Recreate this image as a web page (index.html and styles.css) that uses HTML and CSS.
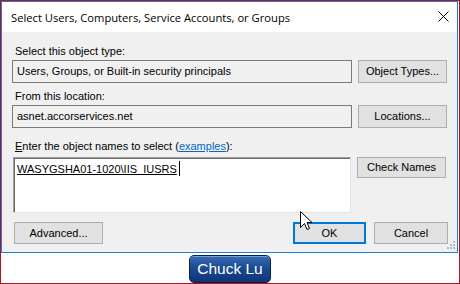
FILE: index.html
```html
<!DOCTYPE html>
<html lang="en">
<head>
  <meta charset="UTF-8">
  <title>Select Users, Computers, Service Accounts, or Groups</title>
  <link rel="stylesheet" href="styles.css">
</head>
<body>
  <div class="frame">
    <div class="dialog">
      <div class="titlebar">
        <span class="title">Select Users, Computers, Service Accounts, or Groups</span>
        <svg class="close" width="11" height="11" viewBox="0 0 11 11"><path d="M0.5 0.5 L10.5 10.5 M10.5 0.5 L0.5 10.5" stroke="#000" stroke-width="1"/></svg>
      </div>
      <div class="content">
        <div class="label">Select this object type:</div>
        <div class="row">
          <div class="field">Users, Groups, or Built-in security principals</div>
          <div class="btn">Object Types...</div>
        </div>
        <div class="label gap1">From this location:</div>
        <div class="row">
          <div class="field">asnet.accorservices.net</div>
          <div class="btn">Locations...</div>
        </div>
        <div class="label gap2"><u>E</u>nter the object names to select (<a class="link">examples</a>):</div>
        <div class="row names">
          <div class="textarea"><span class="resolved">WASYGSHA01-1020\IIS_IUSRS</span><span class="caret"></span></div>
          <div class="btn">Check Names</div>
        </div>
        <div class="bottom">
          <div class="btn adv">Advanced...</div>
          <div class="spacer"></div>
          <div class="btn ok">OK</div>
          <div class="btn cancel">Cancel</div>
        </div>
        <!-- resize grip -->
        <svg class="grip" width="9" height="9" viewBox="0 0 9 9" fill="#b9b9b9">
          <rect x="6" y="0" width="2" height="2"/>
          <rect x="3" y="3" width="2" height="2"/><rect x="6" y="3" width="2" height="2"/>
          <rect x="0" y="6" width="2" height="2"/><rect x="3" y="6" width="2" height="2"/><rect x="6" y="6" width="2" height="2"/>
        </svg>
        <!-- mouse pointer -->
        <svg class="cursor" width="13" height="20" viewBox="0 0 13 20"><path d="M0.5 0.5 L0.5 16.5 L4.5 12.5 L7 18.5 L9.5 17.5 L7 11.5 L12 11.5 Z" fill="#fff" stroke="#000" stroke-width="1" stroke-linejoin="miter"/></svg>
      </div>
    </div>
    <div class="strip">
      <div class="badge">Chuck Lu</div>
    </div>
  </div>
</body>
</html>
```

FILE: styles.css
```css
*{margin: 0; padding: 0; box-sizing: border-box;}
body{
  width: 460px; height: 284px;
  background: #fff;
  font-family: "Liberation Sans", Arial, sans-serif;
  font-size: 11px;
  color: #000;
}
.frame{
  width: 460px; height: 284px;
  border: 1px solid #b5121b;
  display: flex;
  flex-direction: column;
}
.dialog{
  width: 457px; height: 252px;
  border: 1px solid #1883d7;
  display: flex;
  flex-direction: column;
}
.titlebar{
  height: 30px;
  background: #fff;
  display: flex;
  align-items: center;
  padding-left: 9px;
}
.title{
  font-family: "Open Sans", "Noto Sans", sans-serif;
  font-size: 11.2px;
  flex: 1;
}
.close{margin-right: 8px; margin-top: -1px;}

.content{
  flex: 1;
  background: #f0f0f0;
  padding: 13px 9px 0 10px;
  position: relative;
}
.label{height: 13px; line-height: 13px; padding-left: 3px;}
.gap1{margin-top: 7px;}
.gap2{margin-top: 12px;}
.link{color: #0066cc; text-decoration: underline;}

.row{
  display: flex;
  gap: 6px;
  margin-top: 2px;
  align-items: flex-start;
}
.names{margin-top: 4px;}
.field{
  width: 340px; height: 23px;
  border: 1px solid #7a7a7a;
  background: #f0f0f0;
  line-height: 21px;
  padding-left: 4px;
}
.btn{
  width: 89px; height: 23px;
  background: #e1e1e1;
  border: 1px solid #adadad;
  text-align: center;
  line-height: 21px;
}
.names .btn{height: 21px; line-height: 19px;}
.textarea{
  width: 338px; height: 56px;
  margin-left: 1px;
  background: #fff;
  border: 1px solid;
  border-color: #a0a0a0 #e3e3e3 #e3e3e3 #a0a0a0;
  box-shadow: inset 1px 1px #696969;
  padding: 4px 0 0 3px;
  display: flex;
  align-items: flex-start;
  line-height: 14px;
}
.resolved{text-decoration: underline;}
.caret{width: 1px; height: 15px; background: #000; margin-left: 2px; margin-top: -1px;}

.bottom{
  display: flex;
  margin-top: 9px;
  padding-left: 2px;
}
.spacer{flex: 1;}
.bottom .btn{height: 22px; line-height: 20px;}
.ok{width: 73px; border: 2px solid #0078d7; line-height: 18px !important;}
.cancel{width: 74px; margin-left: 8px;}

.grip{position: absolute; right: 1px; bottom: 2px;}
.cursor{position: absolute; left: 298px; top: 179px;}

.strip{
  flex: 1;
  display: flex;
  justify-content: center;
  padding-top: 2px;
}
.badge{
  width: 82px; height: 28px;
  border: 1px solid #0a1f45;
  border-radius: 5px;
  background: linear-gradient(#3a6cb3, #1b4b93 45%, #0e3577);
  color: #fff;
  font-size: 15.5px;
  line-height: 26px;
  text-align: center;
  box-shadow: inset 0 1px rgba(255,255,255,0.35);
}
```
